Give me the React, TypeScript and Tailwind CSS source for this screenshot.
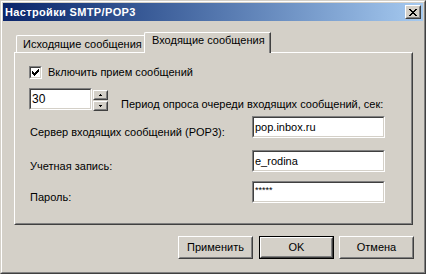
import React from "react";

const F = "font-['Liberation_Sans',Arial,sans-serif] text-[11px] leading-[13px] text-black";

function Raised({ className = "", children }: { className?: string; children?: React.ReactNode }) {
  return (
    <div className={`border border-t-white border-l-white border-r-[#404040] border-b-[#404040] ${className}`}>
      <div className="w-full h-full border border-t-transparent border-l-transparent border-r-[#808080] border-b-[#808080] flex items-center justify-center">
        {children}
      </div>
    </div>
  );
}

function Sunken({ className = "", children }: { className?: string; children?: React.ReactNode }) {
  return (
    <div className={`border border-t-[#808080] border-l-[#808080] border-r-white border-b-white ${className}`}>
      <div className="w-full h-full border border-t-[#404040] border-l-[#404040] border-r-[#d4d0c8] border-b-[#d4d0c8] bg-white">
        {children}
      </div>
    </div>
  );
}

function Edit({ value, small }: { value: string; small?: boolean }) {
  return (
    <Sunken className="w-[133px] h-[22px]">
      <div className={`pl-[1px] pt-[3px] ${small ? "text-[9px] leading-[9px] pt-[2px]" : ""}`}>{value}</div>
    </Sunken>
  );
}

function Btn({ label, def, className = "" }: { label: string; def?: boolean; className?: string }) {
  const inner = <Raised className="w-full h-full">{label}</Raised>;
  return (
    <div className={`w-[75px] h-[23px] ${def ? "border border-black" : ""} ${className}`}>{inner}</div>
  );
}

export default function App() {
  return (
    <div className={`${F} w-[426px] h-[274px] overflow-hidden bg-[#d4d0c8]`}>
      <div className="w-full h-full border border-t-[#d4d0c8] border-l-[#d4d0c8] border-r-[#404040] border-b-[#404040]">
        <div className="w-full h-full border border-t-white border-l-white border-r-[#808080] border-b-[#808080] p-px">
          {/* title bar */}
          <div className="h-[18px] bg-linear-to-r from-[#0a246a] to-[#a6caf0] flex items-center justify-between pl-[2px] pr-[2px]">
            <span className="text-white font-bold text-[11px] leading-[13px] tracking-[0.35px]">Настройки SMTP/POP3</span>
            <Raised className="w-[16px] h-[14px] bg-[#d4d0c8]">
              <svg width="8" height="7" viewBox="0 0 8 7" shapeRendering="crispEdges">
                <path d="M0 0h2v1H0zM6 0h2v1H6zM1 1h2v1H1zM5 1h2v1H5zM2 2h4v1H2zM3 3h2v1H3zM2 4h4v1H2zM1 5h2v1H1zM5 5h2v1H5zM0 6h2v1H0zM6 6h2v1H6z" fill="#000" />
              </svg>
            </Raised>
          </div>

          {/* tab control */}
          <div className="ml-[11px] mt-[11px] w-[399px]">
            <div className="relative z-10 -mb-px h-[21px] flex items-end pl-[2px]">
              <div className="mb-px h-[17px] w-[130px] border border-b-0 border-t-white border-l-white border-r-[#404040] rounded-tl-[2px] pl-[6px] pt-[2px]">
                Исходящие сообщения
              </div>
              <div className="relative -ml-[2px] h-[21px] w-[127px] bg-[#d4d0c8] border border-b-0 border-t-white border-l-white border-r-[#404040] rounded-tl-[2px]">
                <div className="h-full border-r border-r-[#808080] pl-[7px] pt-px">Входящие сообщения</div>
              </div>
            </div>
            <div className="h-[173px] border border-t-white border-l-white border-r-[#404040] border-b-[#404040]">
              <div className="h-full border border-t-transparent border-l-transparent border-r-[#808080] border-b-[#808080] pl-[13px] pt-[12px] flex flex-col">
                {/* checkbox row */}
                <div className="flex items-start h-[13px]">
                  <Sunken className="w-[13px] h-[13px]">
                    <div className="flex items-center justify-center w-full h-full">
                      <svg width="7" height="7" viewBox="0 0 7 7" shapeRendering="crispEdges">
                        <path d="M6 0h1v1H6zM5 1h2v1H5zM0 2h1v1H0zM4 2h3v1H4zM0 3h2v1H0zM3 3h3v1H3zM0 4h5v1H0zM1 5h3v1H1zM2 6h1v1H2z" fill="#000" />
                      </svg>
                    </div>
                  </Sunken>
                  <span className="ml-[6px]">Включить прием сообщений</span>
                </div>
                {/* spin row */}
                <div className="flex items-start h-[22px] mt-[9px]">
                  <Sunken className="w-[63px] h-[22px]">
                    <div className="pl-px pt-[3px] text-[12px] leading-[13px]">30</div>
                  </Sunken>
                  <div className="flex flex-col ml-px mt-[2px] gap-px">
                    <Raised className="w-[15px] h-[10px] bg-[#d4d0c8]">
                      <svg width="3" height="2" viewBox="0 0 3 2" shapeRendering="crispEdges"><path d="M1 0h1v1H1zM0 1h3v1H0z" fill="#000" /></svg>
                    </Raised>
                    <Raised className="w-[15px] h-[10px] bg-[#d4d0c8]">
                      <svg width="3" height="2" viewBox="0 0 3 2" shapeRendering="crispEdges"><path d="M0 0h3v1H0zM1 1h1v1H1z" fill="#000" /></svg>
                    </Raised>
                  </div>
                  <span className="ml-[13px] mt-[10px]">Период опроса очереди входящих сообщений, сек:</span>
                </div>
                {/* server */}
                <div className="flex items-start h-[22px] mt-[6px] pl-px">
                  <span className="w-[222px] mt-[10px]">Сервер входящих сообщений (POP3):</span>
                  <Edit value="pop.inbox.ru" />
                </div>
                <div className="flex items-start h-[22px] mt-[12px] pl-px">
                  <span className="w-[222px] mt-[10px]">Учетная запись:</span>
                  <Edit value="e_rodina" />
                </div>
                <div className="flex items-start h-[22px] mt-[9px] pl-px">
                  <span className="w-[222px] mt-[10px]">Пароль:</span>
                  <Edit value="*****" small />
                </div>
              </div>
            </div>
          </div>

          {/* buttons */}
          <div className="flex justify-end mt-[11px] pr-[9px]">
            <Btn label="Применить" />
            <Btn label="OK" def className="ml-[6px]" />
            <Btn label="Отмена" className="ml-[5px]" />
          </div>
        </div>
      </div>
    </div>
  );
}
